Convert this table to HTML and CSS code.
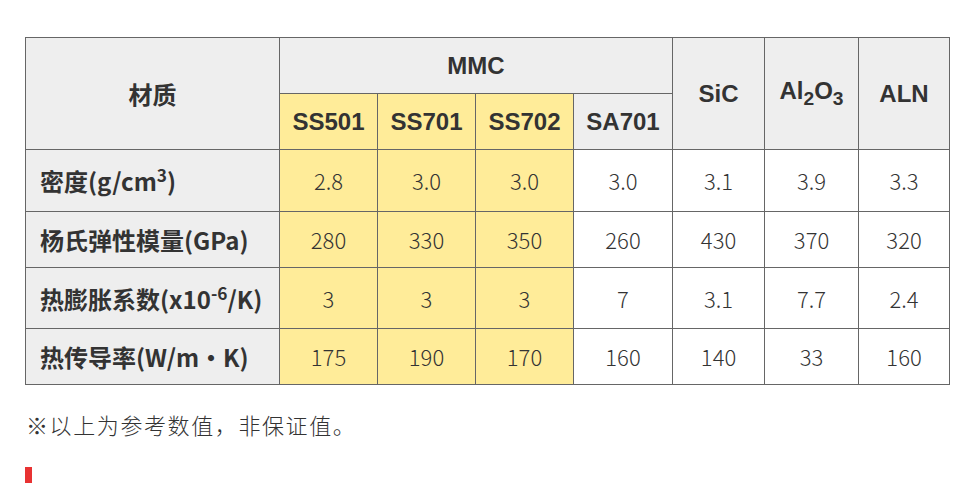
FILE: index.html
```html
<!DOCTYPE html>
<html lang="zh">
<head>
<meta charset="utf-8">
<link rel="stylesheet" href="styles.css">
</head>
<body>
<div class="page">
  <table class="spec">
    <colgroup>
      <col class="c-label"><col class="c-mmc"><col class="c-mmc"><col class="c-mmc"><col class="c-mmc2"><col class="c-sic"><col class="c-al"><col class="c-aln">
    </colgroup>
    <thead>
      <tr>
        <th rowspan="2" class="hd">材质</th>
        <th colspan="4" class="hd latin">MMC</th>
        <th rowspan="2" class="hd latin">SiC</th>
        <th rowspan="2" class="hd latin">Al<sub>2</sub>O<sub>3</sub></th>
        <th rowspan="2" class="hd latin">ALN</th>
      </tr>
      <tr>
        <th class="hl latin">SS501</th>
        <th class="hl latin">SS701</th>
        <th class="hl latin">SS702</th>
        <th class="hd latin">SA701</th>
      </tr>
    </thead>
    <tbody>
      <tr class="tall">
        <th class="lbl">密度(g/cm<sup>3</sup>)</th>
        <td class="hl">2.8</td><td class="hl">3.0</td><td class="hl">3.0</td><td>3.0</td><td>3.1</td><td>3.9</td><td>3.3</td>
      </tr>
      <tr>
        <th class="lbl">杨氏弹性模量(GPa)</th>
        <td class="hl">280</td><td class="hl">330</td><td class="hl">350</td><td>260</td><td>430</td><td>370</td><td>320</td>
      </tr>
      <tr class="tall2">
        <th class="lbl">热膨胀系数(x10<sup>-6</sup>/K)</th>
        <td class="hl">3</td><td class="hl">3</td><td class="hl">3</td><td>7</td><td>3.1</td><td>7.7</td><td>2.4</td>
      </tr>
      <tr>
        <th class="lbl">热传导率(W/m・K)</th>
        <td class="hl">175</td><td class="hl">190</td><td class="hl">170</td><td>160</td><td>140</td><td>33</td><td>160</td>
      </tr>
    </tbody>
  </table>
  <p class="note">※以上为参考数值，非保证值。</p>
  <div class="mark"></div>
</div>
</body>
</html>
```
FILE: styles.css
```css
html, body {
  margin: 0;
  padding: 0;
  background: #fff;
}
body {
  font-family: "Noto Sans CJK SC", "Noto Sans", sans-serif;
  color: #333;
}
.page {
  padding: 37px 0 0 25px;
}
.spec {
  border-collapse: collapse;
  table-layout: fixed;
  width: 925px;
  font-size: 22px;
}
.c-label { width: 254px; }
.c-mmc { width: 98px; }
.c-mmc2 { width: 99px; }
.c-sic { width: 92px; }
.c-al { width: 94px; }
.c-aln { width: 91px; }
.spec th, .spec td {
  border: 1px solid #666;
  text-align: center;
  vertical-align: middle;
  padding: 0;
  height: 55px;
  line-height: 1.3;
  font-weight: 400;
}
.spec tr.tall > * {
  height: 61px;
}
.spec tr.tall2 > * {
  height: 60px;
}
.spec td {
  font-weight: 300;
}
.spec th.hd {
  background: #eeeeee;
  font-weight: 700;
  font-size: 24px;
}
.spec th.hl {
  background: #ffec99;
  font-weight: 700;
}
.spec td.hl {
  background: #ffec99;
}
.spec .latin {
  font-family: "Liberation Sans", "Noto Sans CJK SC", sans-serif;
  font-size: 24px;
}
.spec th.lbl {
  background: #eeeeee;
  text-align: left;
  padding-left: 14px;
  font-weight: 700;
  font-size: 24px;
}
.spec sup {
  font-size: 0.72em;
}
.spec sub {
  font-size: 0.8em;
}
.note {
  margin: 24px 0 0 1px;
  font-size: 22px;
  font-weight: 300;
  letter-spacing: 1.6px;
  line-height: 1.4;
}
.mark {
  margin-top: 27px;
  width: 7px;
  height: 16px;
  background: #e83232;
}
```
